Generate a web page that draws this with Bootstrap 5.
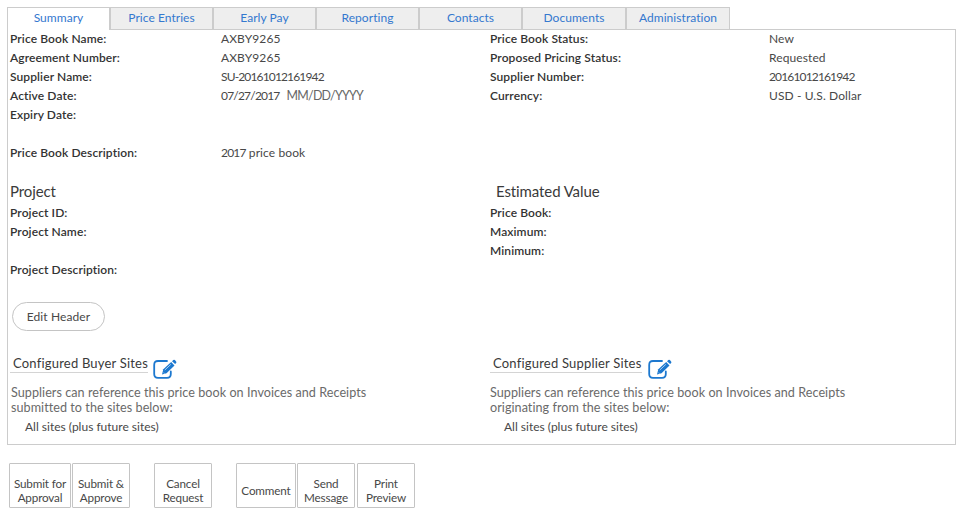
<!DOCTYPE html>
<html lang="en">
<head>
<meta charset="utf-8">
<meta name="viewport" content="width=device-width, initial-scale=1">
<title>Price Book</title>
<link href="https://cdn.jsdelivr.net/npm/bootstrap@5.3.0/dist/css/bootstrap.min.css" rel="stylesheet">
<style>
body{font-family:Lato,"Open Sans",sans-serif;font-size:12px;line-height:19px;color:#484848;letter-spacing:.1px;padding:7px 5px 0 7px;overflow:hidden;white-space:nowrap;font-variant-ligatures:none}
.tabbar{height:22px}
.tabbar .nav-link{width:103px;height:22px;padding:0;line-height:20px;text-align:center;color:#3478cf;background:#eee;border:1px solid #ccc;border-bottom:0;border-radius:0;letter-spacing:.05px}
.tabbar .nav-link.wide{width:104px}
.tabbar .nav-link.active{background:#fff;color:#3478cf;height:23px;z-index:1}
.panel{width:949px;height:416px;border:1px solid #ccc;padding-left:2px}
.half{width:480px}
.half+.half{width:460px}
.summary{margin-top:-1px}
.field{height:19px}
.field dt{width:211px;font-weight:600;color:#333}
.half+.half .field dt{width:279px}
.field dd{margin:0}
.digits{letter-spacing:-.85px}
.date{letter-spacing:-.8px}
.hint{font-size:12.4px;color:#666;margin-left:7px;letter-spacing:-.75px}
.sections{margin-top:18px}
.section-title{font-size:15px;line-height:22px;height:23px;font-weight:400;color:#3a3a3a;margin:0;letter-spacing:-.1px}
.section-title.inset{padding-left:6px}
.pill{width:93px;height:29px;margin:23px 0 0 2px;padding:0 0 1px;font-size:12px;line-height:25px;border:1px solid #c4c4c4;border-radius:15px;color:#484848;letter-spacing:.1px}
.site-title{font-size:13px;line-height:17px;height:18px;font-weight:400;color:#3a3a3a;border-bottom:1px solid #d4d4d4;margin:0;padding:0 0 0 3px;letter-spacing:.2px}
.site-title.buyer{width:138px}
.site-title.supplier{width:152px}
.site-note{font-size:12.6px;line-height:15px;color:#6a6a6a;margin:6px 0 0;letter-spacing:.05px}
.buyer-note{padding-left:1px}
.site-scope{padding-left:15px;margin:2px 0 0;letter-spacing:0}
.half+.half .site-scope{padding-left:14px}
.edit-icon{width:24px;height:20px;margin:4px 0 0 5px}
.half+.half .edit-icon{margin-left:6px}
.tool{width:58px;height:45px;padding:8px 0 0;line-height:14px;font-size:11.7px;border:1px solid #c4c4c4;border-radius:1px;color:#484848;letter-spacing:-.15px}
.tool.wide{width:62px}
.tool.mid{width:60px}
.tools{margin-top:18px;padding-left:2px;gap:1px}
.tools .gapped{margin-left:23px}
.tools .last{margin-left:1px}
</style>
<script src="https://cdn.jsdelivr.net/npm/bootstrap@5.3.0/dist/js/bootstrap.bundle.min.js"></script>
</head>
<body>
<svg class="d-none"><symbol id="edit" viewBox="0 0 24 20"><path d="M14 2H5Q1.2 2 1.2 6v9q0 3.8 3.8 3.8h9q3.8 0 3.8-3.8v-2.5" fill="none" stroke="#1c78cf" stroke-width="1.8" stroke-linecap="round"/><path d="M9 15.5l1.3-5.2L18.2 3l3.3 3.5-8 7.7z" fill="#1c78cf"/><path d="M19 2.2l1.3-1.2q.8-.6 1.6.1l1.2 1.3q.7.8 0 1.5l-1 1.1z" fill="#1c78cf"/><path d="M11.8 11l6-5.6M10.6 13.8l1 .6" stroke="#b9d8f3" stroke-width=".9"/></symbol></svg>
<ul class="nav tabbar flex-nowrap">
<li><a class="nav-link active position-relative" href="#">Summary</a></li>
<li><a class="nav-link" href="#">Price Entries</a></li>
<li><a class="nav-link" href="#">Early Pay</a></li>
<li><a class="nav-link" href="#">Reporting</a></li>
<li><a class="nav-link" href="#">Contacts</a></li>
<li><a class="nav-link wide" href="#">Documents</a></li>
<li><a class="nav-link wide" href="#">Administration</a></li>
</ul>
<main class="panel">
<div class="d-flex summary">
<dl class="half mb-0">
<div class="field d-flex"><dt>Price Book Name:</dt><dd>AXBY9265</dd></div>
<div class="field d-flex"><dt>Agreement Number:</dt><dd>AXBY9265</dd></div>
<div class="field d-flex"><dt>Supplier Name:</dt><dd class="digits">SU-20161012161942</dd></div>
<div class="field d-flex"><dt>Active Date:</dt><dd><span class="date">07/27/2017</span><span class="hint">MM/DD/YYYY</span></dd></div>
<div class="field d-flex"><dt>Expiry Date:</dt><dd></dd></div>
<div class="field"></div>
<div class="field d-flex"><dt>Price Book Description:</dt><dd><span class="date">2017</span> price book</dd></div>
</dl>
<dl class="half mb-0">
<div class="field d-flex"><dt>Price Book Status:</dt><dd>New</dd></div>
<div class="field d-flex"><dt>Proposed Pricing Status:</dt><dd>Requested</dd></div>
<div class="field d-flex"><dt>Supplier Number:</dt><dd class="digits">20161012161942</dd></div>
<div class="field d-flex"><dt>Currency:</dt><dd>USD - U.S. Dollar</dd></div>
</dl>
</div>
<div class="d-flex sections">
<section class="half">
<h2 class="section-title">Project</h2>
<dl class="mb-0">
<div class="field d-flex"><dt>Project ID:</dt></div>
<div class="field d-flex"><dt>Project Name:</dt></div>
<div class="field"></div>
<div class="field d-flex"><dt>Project Description:</dt></div>
</dl>
</section>
<section class="half">
<h2 class="section-title inset">Estimated Value</h2>
<dl class="mb-0">
<div class="field d-flex"><dt>Price Book:</dt></div>
<div class="field d-flex"><dt>Maximum:</dt></div>
<div class="field d-flex"><dt>Minimum:</dt></div>
</dl>
</section>
</div>
<button class="btn pill d-block" type="button">Edit Header</button>
<div class="d-flex mt-4">
<section class="half">
<div class="d-flex"><h3 class="site-title buyer">Configured Buyer Sites</h3><svg class="edit-icon"><use href="#edit"/></svg></div>
<p class="site-note buyer-note">Suppliers can reference this price book on Invoices and Receipts<br>submitted to the sites below:</p>
<p class="site-scope">All sites (plus future sites)</p>
</section>
<section class="half">
<div class="d-flex"><h3 class="site-title supplier">Configured Supplier Sites</h3><svg class="edit-icon"><use href="#edit"/></svg></div>
<p class="site-note">Suppliers can reference this price book on Invoices and Receipts<br>originating from the sites below:</p>
<p class="site-scope">All sites (plus future sites)</p>
</section>
</div>
</main>
<div class="d-flex tools">
<button class="btn tool wide">Submit for<br>Approval</button>
<button class="btn tool">Submit &amp;<br>Approve</button>
<button class="btn tool gapped">Cancel<br>Request</button>
<button class="btn tool mid gapped">Comment</button>
<button class="btn tool">Send<br>Message</button>
<button class="btn tool last">Print<br>Preview</button>
</div>
</body>
</html>
